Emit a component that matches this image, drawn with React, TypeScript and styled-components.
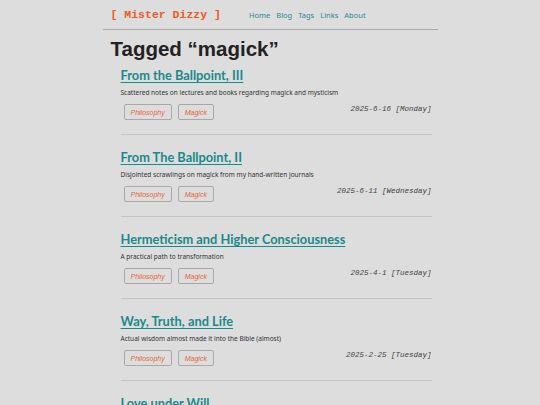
import React from "react";
import styled, { createGlobalStyle } from "styled-components";

const GlobalStyle = createGlobalStyle`
  html, body {
    margin: 0;
    padding: 0;
    background-color: #dddddd;
  }
  body {
    font-family: "Liberation Sans", Arial, sans-serif;
  }
`;

const Page = styled.div`
  width: 335px;
  margin: 0 auto;
`;

const Header = styled.header`
  display: flex;
  align-items: center;
  height: 30px;
  padding-left: 8px;
  border-bottom: 1px solid #a9a9a9;
  box-sizing: border-box;
`;

const Logo = styled.a`
  font-family: "Liberation Mono", "Courier New", monospace;
  font-weight: bold;
  font-size: 11.5px;
  color: #ec5a28;
  white-space: pre;
  text-decoration: none;
`;

const Nav = styled.nav`
  display: flex;
  gap: 6px;
  margin-left: 28px;
`;

const NavLink = styled.a`
  font-family: "Noto Sans", sans-serif;
  font-size: 7.5px;
  color: #2b8a8a;
  text-decoration: none;
`;

const Title = styled.h1`
  font-family: "Liberation Sans", Arial, sans-serif;
  font-size: 20.5px;
  font-weight: 600;
  color: #222;
  margin: 7px 0 0 8px;
  line-height: 24px;
`;

const PostList = styled.div`
  padding: 0 6px 0 18px;
`;

const Post = styled.article`
  padding-top: 5px;
  padding-bottom: 14px;
  margin-bottom: 8px;
  border-bottom: 1px solid #c4c4c4;
`;

const PostTitle = styled.a`
  display: block;
  font-family: Lato, "Noto Sans", sans-serif;
  font-size: 12.8px;
  font-weight: bold;
  color: #1a8a8a;
  text-decoration: underline;
  text-underline-offset: 2px;
  line-height: 18px;
`;

const Summary = styled.p`
  font-family: "Noto Sans", sans-serif;
  font-size: 6.5px;
  color: #333;
  margin: 4px 0 0 0;
  line-height: 9px;
`;

const MetaRow = styled.div`
  display: flex;
  justify-content: space-between;
  align-items: flex-start;
  margin-top: 3px;
`;

const Tags = styled.div`
  display: flex;
  gap: 6px;
  padding-top: 4px;
  padding-left: 3px;
`;

const Tag = styled.a`
  display: flex;
  align-items: center;
  justify-content: center;
  height: 16px;
  padding: 0 6px;
  box-sizing: border-box;
  border: 1px solid #a8a8a8;
  border-radius: 2px;
  font-family: "Liberation Sans", Arial, sans-serif;
  font-style: italic;
  font-size: 7px;
  color: #e8623a;
  text-decoration: none;
`;

const PostDate = styled.span`
  font-family: "Liberation Mono", "Courier New", monospace;
  font-style: italic;
  font-size: 7.5px;
  line-height: 9px;
  color: #444;
  margin-top: 5px;
`;

const posts = [
  {
    title: "From the Ballpoint, III",
    summary: "Scattered notes on lectures and books regarding magick and mysticism",
    date: "2025-6-16 [Monday]",
  },
  {
    title: "From The Ballpoint, II",
    summary: "Disjointed scrawlings on magick from my hand-written journals",
    date: "2025-6-11 [Wednesday]",
  },
  {
    title: "Hermeticism and Higher Consciousness",
    summary: "A practical path to transformation",
    date: "2025-4-1 [Tuesday]",
  },
  {
    title: "Way, Truth, and Life",
    summary: "Actual wisdom almost made it into the Bible (almost)",
    date: "2025-2-25 [Tuesday]",
  },
  {
    title: "Love under Will",
    summary: "Notes on the law",
    date: "2025-1-20 [Monday]",
  },
];

const App: React.FC = () => {
  return (
    <>
      <GlobalStyle />
      <Page>
        <Header>
          <Logo href="#">[ Mister Dizzy ]</Logo>
          <Nav>
            <NavLink href="#">Home</NavLink>
            <NavLink href="#">Blog</NavLink>
            <NavLink href="#">Tags</NavLink>
            <NavLink href="#">Links</NavLink>
            <NavLink href="#">About</NavLink>
          </Nav>
        </Header>
        <Title>Tagged “magick”</Title>
        <PostList>
          {posts.map((post) => (
            <Post key={post.title}>
              <PostTitle href="#">{post.title}</PostTitle>
              <Summary>{post.summary}</Summary>
              <MetaRow>
                <Tags>
                  <Tag href="#">Philosophy</Tag>
                  <Tag href="#">Magick</Tag>
                </Tags>
                <PostDate>{post.date}</PostDate>
              </MetaRow>
            </Post>
          ))}
        </PostList>
      </Page>
    </>
  );
};

export default App;
